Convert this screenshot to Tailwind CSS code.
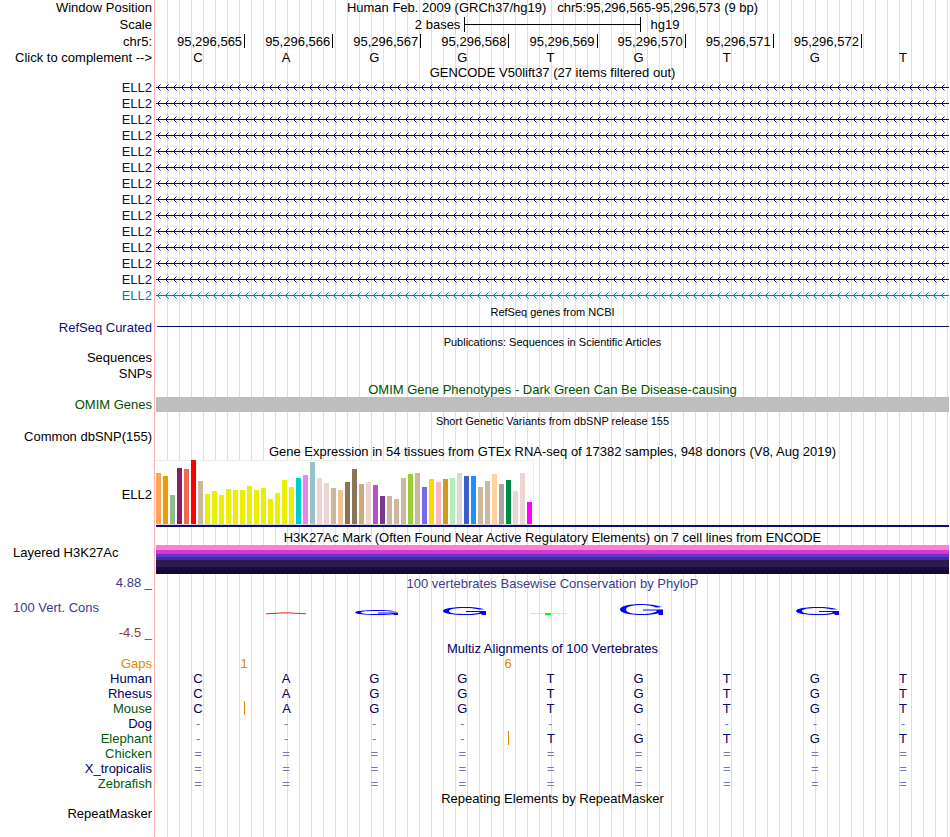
<!DOCTYPE html>
<html lang="en">
<head>
  <meta charset="UTF-8">
  <meta name="viewport" content="width=device-width, initial-scale=1.0">
  <title>Genome Browser - hg19 chr5:95,296,565-95,296,573</title>
  <script src="https://cdn.jsdelivr.net/npm/@tailwindcss/browser@4"></script>
</head>
<body class="bg-white">

  <!-- Left column holds the track labels, right column the tracks over the guide lines -->
  <main class="grid min-h-screen grid-cols-[152px_minmax(0,1fr)] content-start gap-x-1 bg-[linear-gradient(to_right,#fff_154px,#ffb4b4_154px,#ffb4b4_155px,#fff_155px,#fff_156px,transparent_156px),repeating-linear-gradient(to_right,transparent_0px,transparent_11px,#dcdcf8_11px,#dcdcf8_12px)] pr-px font-['Liberation_Sans',Arial,sans-serif] text-[13px] leading-4 whitespace-nowrap text-black">

    <!-- Ruler -->
    <div class="text-right">Window Position</div>
    <h1 class="text-center">Human Feb. 2009 (GRCh37/hg19) &nbsp; chr5:95,296,565-95,296,573 (9 bp)</h1>

    <div class="pt-px text-right">Scale</div>
    <div class="grid h-[18px] grid-cols-[7fr_4fr_7fr] pt-px">
      <div class="pr-1 text-right">2 bases</div>
      <div class="flex h-[15px] items-center border-x border-black"><div class="h-px w-full bg-black"></div></div>
      <div class="pl-[10px]">hg19</div>
    </div>

    <div class="text-right">chr5:</div>
    <div id="positions" class="grid h-4 grid-cols-9"></div>

    <div class="text-right leading-[15px]">Click to complement --&gt;</div>
    <div id="bases" class="grid grid-cols-9 text-center leading-[15px]"></div>

    <!-- GENCODE -->
    <h2 class="col-start-2 text-center leading-[15px]">GENCODE V50lift37 (27 items filtered out)</h2>
    <div id="geneLabels" class="text-right"></div>
    <div id="geneTracks"></div>

    <!-- RefSeq -->
    <h2 class="col-start-2 pt-px text-center text-[11px] leading-[15px]">RefSeq genes from NCBI</h2>
    <div class="text-right leading-[15px] text-[#0c0c78]">RefSeq Curated</div>
    <div class="pt-[6px] pl-px"><div class="h-px bg-[#0c0c78]"></div></div>

    <!-- Publications -->
    <h2 class="col-start-2 text-center text-[11px] leading-[15px]">Publications: Sequences in Scientific Articles</h2>
    <div class="text-right">Sequences</div>
    <div></div>
    <div class="text-right">SNPs</div>
    <div></div>

    <!-- OMIM -->
    <h2 class="col-start-2 text-center leading-[15px] text-[#005000]">OMIM Gene Phenotypes - Dark Green Can Be Disease-causing</h2>
    <div class="text-right leading-[15px] text-[#005000]">OMIM Genes</div>
    <div class="bg-[#bebebe]"></div>

    <!-- dbSNP -->
    <h2 class="col-start-2 pt-px text-center text-[11px] leading-4">Short Genetic Variants from dbSNP release 155</h2>
    <div class="text-right leading-[15px]">Common dbSNP(155)</div>
    <div></div>

    <!-- GTEx -->
    <h2 class="col-start-2 text-center">Gene Expression in 54 tissues from GTEx RNA-seq of 17382 samples, 948 donors (V8, Aug 2019)</h2>
    <div class="self-center text-right">ELL2</div>
    <div class="h-[70px]">
      <div id="gtex" class="flex h-[65px] w-[378px] items-end gap-[2px] border-t border-r border-b border-[#ececec] border-b-[#d8d8d8] bg-white"></div>
      <div class="h-[2px] bg-[#0c0c78]"></div>
    </div>

    <!-- H3K27Ac -->
    <h2 class="col-start-2 text-center leading-[15px]">H3K27Ac Mark (Often Found Near Active Regulatory Elements) on 7 cell lines from ENCODE</h2>
    <div class="pl-[13px] leading-[15px]">Layered H3K27Ac</div>
    <div>
      <div class="h-[5px] bg-[#ff7fd2]"></div>
      <div class="h-1 bg-[#cf3ad2]"></div>
      <div class="h-[3px] bg-[#6a35c8]"></div>
      <div class="h-[3px] bg-[#3532a8]"></div>
      <div class="h-[7px] bg-[#2f1a4e]"></div>
      <div class="h-[3px] bg-[#180a4c]"></div>
      <div class="h-1 bg-[#160828]"></div>
    </div>

    <!-- Conservation -->
    <div class="flex flex-col gap-[9px] pt-px text-right text-[#3c3c8c]">
      <div>4.88 _</div>
      <div class="pl-[13px] text-left">100 Vert. Cons</div>
      <div class="text-[#8c3c3c]">-4.5 _</div>
    </div>
    <div class="h-[68px] pt-[2px]">
      <h2 class="text-center text-[#3c3c8c]">100 vertebrates Basewise Conservation by PhyloP</h2>
      <div id="logo" class="grid h-[23px] grid-cols-9 items-end justify-items-center"></div>
    </div>

    <!-- Multiz -->
    <h2 class="col-start-2 text-center leading-[14px] text-[#000064]">Multiz Alignments of 100 Vertebrates</h2>
    <div class="text-right leading-[15px] text-[#e18700]">Gaps</div>
    <div class="grid grid-cols-18 pr-px text-center leading-[15px] text-[#e18700]">
      <div class="col-span-2 col-start-2">1</div>
      <div class="col-span-2 col-start-8">6</div>
    </div>
    <div id="speciesLabels" class="text-right leading-[15px]"></div>
    <div id="speciesRows" class="text-center leading-[15px]"></div>

    <!-- RepeatMasker -->
    <h2 class="col-start-2 pt-px text-center leading-[14px]">Repeating Elements by RepeatMasker</h2>
    <div class="text-right leading-[15px]">RepeatMasker</div>
    <div></div>
  </main>

  <script>
    const start = 95296565;
    const sequence = 'CAGGTGTGT';

    // Strand arrows repeat every 8px along the intron line
    function renderGenes() {
      const total = 14;
      let labels = '';
      let tracks = '';
      for (let i = 0; i < total; i++) {
        const color = i === total - 1 ? 'text-[#0c78b4]' : 'text-[#0c0c78]';
        labels += `<div class="${color}">ELL2</div>`;
        tracks += `
          <svg class="block h-4 w-full ${color}" aria-hidden="true">
            <defs>
              <pattern id="arrows${i}" width="8" height="16" patternUnits="userSpaceOnUse">
                <path d="M4.5 4.5 L1.5 7.5 L4.5 10.5" fill="none" stroke="currentColor" stroke-width="1"/>
              </pattern>
            </defs>
            <rect width="100%" height="16" fill="url(#arrows${i})"/>
            <rect y="7" width="100%" height="1" fill="currentColor"/>
          </svg>`;
      }
      document.getElementById('geneLabels').innerHTML = labels;
      document.getElementById('geneTracks').innerHTML = tracks;
    }

    function renderRuler() {
      let positions = '';
      let bases = '';
      for (let i = 0; i < sequence.length; i++) {
        const tick = i > 0 ? 'border-l border-black' : '';
        const label = i < sequence.length - 1 ? (start + i).toLocaleString('en-US') : '';
        positions += `<div class="h-[14px] pr-[2px] text-right ${tick}">${label}</div>`;
        bases += `<div class="pr-1">${sequence[i]}</div>`;
      }
      document.getElementById('positions').innerHTML = positions;
      document.getElementById('bases').innerHTML = bases;
    }

    // Median expression per tissue: [height, color]
    const tissues = [
      [51, '#ffa54f'], [48, '#ee9a00'], [29, '#8fbc8f'], [56, '#8b1c62'], [55, '#ee6a50'], [64, '#ff0000'],
      [43, '#cdb79e'], [30, '#eeee00'], [33, '#eeee00'], [29, '#eeee00'], [35, '#eeee00'], [34, '#eeee00'],
      [34, '#eeee00'], [38, '#eeee00'], [34, '#eeee00'], [36, '#eeee00'], [25, '#eeee00'], [31, '#eeee00'],
      [44, '#eeee00'], [37, '#eeee00'], [46, '#00cdcd'], [49, '#ee82ee'], [62, '#9ac0cd'], [46, '#eed5d2'],
      [41, '#eed5d2'], [36, '#cdb79e'], [34, '#eec591'], [42, '#8b7355'], [55, '#8b7355'], [40, '#cdaa7d'],
      [42, '#eed5d2'], [39, '#b452cd'], [28, '#7a378b'], [28, '#cdb79e'], [25, '#cdb79e'], [46, '#cdb79e'],
      [50, '#9acd32'], [51, '#cdb79e'], [37, '#7a67ee'], [45, '#ffd700'], [42, '#ffb6c1'], [45, '#cd9b1d'],
      [46, '#b4eeb4'], [51, '#d9d9d9'], [48, '#3a5fcd'], [48, '#1e90ff'], [37, '#cdb79e'], [43, '#cdb79e'],
      [50, '#ffd39b'], [40, '#a6a6a6'], [44, '#008b45'], [33, '#eed5d2'], [51, '#eed5d2'], [22, '#ff00ff']
    ];

    function renderExpression() {
      document.getElementById('gtex').innerHTML = tissues.map(([height, color]) =>
        `<div class="w-[5px] shrink-0" style="height:${height}px;background:${color}"></div>`).join('');
    }

    // Flattened conservation marks, one per base
    function ring(height) {
      const mid = height / 2;
      return `
        <svg class="block" width="44" height="${height}" viewBox="-1 0 44 ${height}" fill="#0000ff" aria-hidden="true">
          <path fill-rule="evenodd" d="M42 ${height * 0.28} C36 ${height * 0.08} 29 0 22 0 C9 0 0 ${height * 0.2} 0 ${mid} C0 ${height * 0.8} 9 ${height} 22 ${height} C29 ${height} 35 ${height * 0.93} 38 ${height * 0.83} L39 ${height} H43 V${mid} H23 V${mid + 1} H37 C36 ${height * 0.8} 30 ${height - 1} 22 ${height - 1} C12 ${height - 1} 6 ${height * 0.78} 6 ${mid} C6 ${height * 0.24} 12 1 22 1 C29 1 33 ${height * 0.2} 36 ${height * 0.32} Z"/>
        </svg>`;
    }

    function renderLogo() {
      const red = `
        <svg class="block" width="44" height="3" viewBox="0 0 44 3" fill="none" stroke="#ff0000" aria-hidden="true">
          <path d="M0 1.8 Q20 -0.2 40 1.8" stroke-width="0.9"/>
        </svg>`;
      const green = `
        <svg class="block" width="44" height="2" viewBox="0 0 44 2" fill="#00ff00" aria-hidden="true">
          <rect x="0" y="0" width="37" height="1" fill="#c8f5c8"/>
          <rect x="15" y="0" width="6" height="2"/>
        </svg>`;
      const marks = ['', red, ring(5), ring(8), green, ring(11), '', ring(8), ''];
      document.getElementById('logo').innerHTML = marks.map(mark => `<div>${mark}</div>`).join('');
    }

    // insert = index of the column that has an insertion tick on its left edge
    const species = [
      { name: 'Human', color: 'text-[#000064]', row: 'CAGGTGTGT' },
      { name: 'Rhesus', color: 'text-[#000064]', row: 'CAGGTGTGT' },
      { name: 'Mouse', color: 'text-[#005a0a]', row: 'CAGGTGTGT', insert: 1 },
      { name: 'Dog', color: 'text-[#000064]', row: '---------' },
      { name: 'Elephant', color: 'text-[#005a0a]', row: '----TGTGT', insert: 4 },
      { name: 'Chicken', color: 'text-[#005a0a]', row: '=========' },
      { name: 'X_tropicalis', color: 'text-[#000064]', row: '=========' },
      { name: 'Zebrafish', color: 'text-[#005a0a]', row: '=========' }
    ];

    function renderSpecies() {
      document.getElementById('speciesLabels').innerHTML = species.map(s =>
        `<div class="${s.color}">${s.name}</div>`).join('');
      document.getElementById('speciesRows').innerHTML = species.map(s => {
        const cells = s.row.split('').map((base, i) => {
          const color = base === '-' || base === '=' ? 'text-[#7878b4]' : 'text-[#000064]';
          const tick = s.insert === i ? 'border-l border-[#e18700]' : '';
          return `<div class="h-[14px] pr-1 ${color} ${tick}">${base}</div>`;
        }).join('');
        return `<div class="grid h-[15px] grid-cols-9">${cells}</div>`;
      }).join('');
    }

    renderRuler();
    renderGenes();
    renderExpression();
    renderLogo();
    renderSpecies();
  </script>
</body>
</html>
